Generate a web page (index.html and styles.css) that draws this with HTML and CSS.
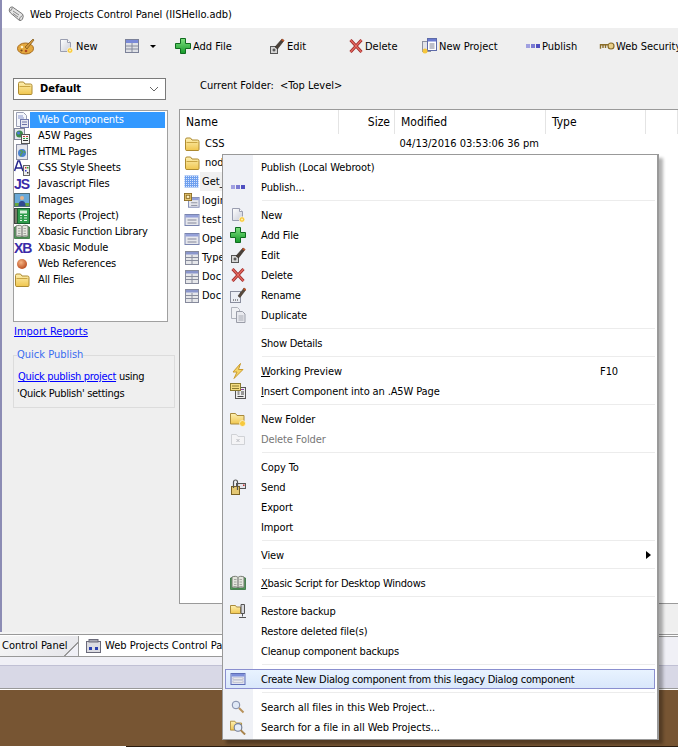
FILE: index.html
```html
<!DOCTYPE html>
<html lang="en">
<head>
  <meta charset="UTF-8">
  <title>Web Projects Control Panel</title>
  <link rel="stylesheet" href="styles.css">
</head>
<body>
  <!-- icon sprite -->
  <svg class="sprite" xmlns="http://www.w3.org/2000/svg">
    <defs>
      <linearGradient id="gold" x1="0" y1="0" x2="0" y2="1"><stop offset="0" stop-color="#fdf0b4"/><stop offset="1" stop-color="#f0c64e"/></linearGradient>
      <linearGradient id="green" x1="0" y1="0" x2="0" y2="1"><stop offset="0" stop-color="#7fe07f"/><stop offset="1" stop-color="#159a2a"/></linearGradient>
      <radialGradient id="ball" cx=".4" cy=".35" r=".7"><stop offset="0" stop-color="#f6b483"/><stop offset="1" stop-color="#b8481a"/></radialGradient>
      <linearGradient id="paper" x1="0" y1="0" x2="1" y2="1"><stop offset="0" stop-color="#fff"/><stop offset="1" stop-color="#c9ccd8"/></linearGradient>
    </defs>
    <symbol id="i-folder" viewBox="0 0 16 16"><path d="M1.500 3.500q0-1.500 1.500-1.500h3.500l1.500 2h5.500q1.500 0 1.500 1.500v8q0 1-1 1h-11q-1.500 0-1.500-1z" fill="url(#gold)" stroke="#ad8a30"/><path d="M2.500 6.500h11" stroke="#c9a544"/></symbol>
    <symbol id="i-scroll" viewBox="0 0 16 16"><path d="M1.500 2.500q1-2 3-1.500l10 7q1.500 2 0 5-1 2-3 1.500L2.500 7q-2-2-1-4.500z" fill="#e4e4e4" stroke="#777"/><path d="M1.500 4.500q2 1 3-3M11.500 14.500q-1-3 3-5M5 5l6 4M5 7.500l5 3.500" fill="none" stroke="#888"/></symbol>
    <symbol id="i-palette" viewBox="0 0 18 18"><ellipse cx="8.500" cy="11.500" rx="8" ry="5.500" fill="#e4a83e" stroke="#a5691c"/><circle cx="5" cy="10" r="1.300" fill="#fff1c4"/><circle cx="9" cy="14" r="1.300" fill="#b24a20"/><circle cx="4.500" cy="13.500" r="1.100" fill="#7b4a1a"/><path d="M8 10L16 2l1 1-7 9z" fill="#d2963a" stroke="#7a5418" stroke-width=".7"/></symbol>
    <symbol id="i-new" viewBox="0 0 16 16"><path d="M2.500 1.500h7l3 3v9h-10z" fill="url(#paper)" stroke="#9a9eb0"/><path d="M9.500 1.500v3h3" fill="#fff" stroke="#9a9eb0"/><circle cx="12" cy="12.500" r="2.800" fill="#f7c93e" stroke="#fff" stroke-width=".6"/><circle cx="12" cy="12.500" r="1" fill="#fff2b8"/></symbol>
    <symbol id="i-grid" viewBox="0 0 16 16"><rect x="1.500" y="1.500" width="13" height="13" fill="#dfe1e6" stroke="#7b8198"/><rect x="2" y="2" width="12" height="3" fill="#7a8ad8"/><path d="M8 5v9M2 8h12M2 11h12" stroke="#858a9c"/></symbol>
    <symbol id="i-grid-s" viewBox="0 0 16 16"><rect x="1.500" y="1.500" width="13" height="13" fill="#e6e7ea" stroke="#868a9c"/><rect x="2" y="2" width="12" height="2.500" fill="#8a96cc"/><path d="M8 5v9M2 7.500h12M2 10.500h12" stroke="#8a8e9e"/></symbol>
    <symbol id="i-add" viewBox="0 0 16 16"><path d="M5.500 .5h5v5h5v5h-5v5h-5v-5h-5v-5h5z" fill="url(#green)" stroke="#0f6b1e"/></symbol>
    <symbol id="i-edit" viewBox="0 0 16 16"><rect x="1.500" y="8.500" width="7" height="7" fill="#d5d5d5" stroke="#555"/><path d="M3.500 12h3M5 10.500v3" stroke="#333"/><path d="M6 9l7-8 2 1.500-6.500 8.500z" fill="#4a4038" stroke="#2c2622" stroke-width=".6"/><path d="M12.500 1.500L15 3" stroke="#c0562a" stroke-width="1.500"/></symbol>
    <symbol id="i-delete" viewBox="0 0 16 16"><path d="M2.500 2l11 12M13.500 2l-11 12" stroke="#9c2a2a" stroke-width="3"/><path d="M2.500 2l11 12M13.500 2l-11 12" stroke="#e66a60" stroke-width="1.200"/></symbol>
    <symbol id="i-project" viewBox="0 0 16 16"><rect x="1.500" y="3.500" width="8" height="10" fill="#e2e3e8" stroke="#8c90a0"/><rect x="6.500" y=".5" width="9" height="12" fill="#fff" stroke="#5d6aa8"/><rect x="7" y="1" width="8" height="2.500" fill="#6b7bd0"/><path d="M8.500 6h5M8.500 8h5M8.500 10h5" stroke="#7b7f93"/><circle cx="4" cy="13" r="2.500" fill="#f6c63c"/></symbol>
    <symbol id="i-publish" viewBox="0 0 16 16"><rect x="1" y="6" width="4" height="4" fill="#a0a0e0"/><rect x="6" y="6" width="4" height="4" fill="#7a7ad2"/><rect x="11" y="6" width="4" height="4" fill="#4f4fc0"/></symbol>
    <symbol id="i-key" viewBox="0 0 16 16"><circle cx="12" cy="8" r="3" fill="#e8cf8a" stroke="#8a6d2a" stroke-width="1.200"/><path d="M9 6.800H1.500v4M4 7v3M6.500 7v3" fill="none" stroke="#8a6d2a" stroke-width="1.400"/></symbol>
    <symbol id="i-webcomp" viewBox="0 0 16 16"><path d="M2.500 .5h7l3 3v11h-10z" fill="#f4f6fb" stroke="#9a9fb4"/><path d="M4 4h5M4 6h6" stroke="#8a96cc"/><rect x="6.500" y="7.500" width="8" height="8" fill="#e6e8f0" stroke="#6f79ac"/><path d="M8 10h5M8 12.500h5" stroke="#6a72a8"/></symbol>
    <symbol id="i-a5w" viewBox="0 0 16 16"><rect x=".5" y=".5" width="10" height="11" fill="#e6e7ee" stroke="#81859a"/><circle cx="5.500" cy="6" r="3.500" fill="#3e8a4a"/><circle cx="4.500" cy="5" r="1.500" fill="#4d7ae0"/><rect x="7.500" y="6.500" width="8" height="9" fill="#f4f4f4" stroke="#555"/><path d="M9 8.500h2M12 8.500h2" stroke="#c03a3a"/><path d="M9 10.500h2M12 10.500h2" stroke="#2f9a3a"/><path d="M9 12.500h5" stroke="#333"/></symbol>
    <symbol id="i-html" viewBox="0 0 16 16"><rect x="2.500" y=".5" width="11" height="15" fill="#e6e7ee" stroke="#8a8ea2"/><circle cx="8" cy="9" r="4" fill="#4a82cc"/><path d="M6 7c2-1 3 1 2 2s-2 1-1 3M10 7l1 2" stroke="#5aa04a" stroke-width="1.300" fill="none"/></symbol>
    <symbol id="i-css" viewBox="0 0 16 16"><path d="M.5 11L4 1h1.500L9 11M2 8h5.500" fill="none" stroke="#25258c" stroke-width="1.500"/><rect x="9.500" y="5.500" width="6" height="10" fill="#eee" stroke="#666"/><rect x="11" y="7" width="1.500" height="1.500" fill="#c33"/><rect x="13" y="7" width="1.500" height="1.500" fill="#3a3"/><rect x="11" y="10" width="1.500" height="1.500" fill="#33c"/><rect x="13" y="12" width="1.500" height="1.500" fill="#333"/></symbol>
    <symbol id="i-image" viewBox="0 0 16 16"><rect x=".5" y="1.500" width="15" height="13" fill="#6aa9d8" stroke="#4f6d7a"/><rect x="1" y="11" width="14" height="3" fill="#67a83e"/><circle cx="8" cy="6" r="2" fill="#e6b48c"/><path d="M4.500 14c0-4 1.500-5 3.500-5s3.500 1 3.500 5z" fill="#324a90"/></symbol>
    <symbol id="i-report" viewBox="0 0 16 16"><rect x=".5" y=".5" width="4" height="15" fill="#7a7a6a" stroke="#444"/><rect x="3.500" y=".5" width="12" height="15" fill="#2f9c4c" stroke="#1a5e2e"/><rect x="6" y="2.500" width="7" height="3" fill="#d8f0dc"/><path d="M6 7.500h2M10 7.500h3M6 10h2M10 10h3M6 12.500h2M10 12.500h3" stroke="#e4f6e8" stroke-width="1.200"/></symbol>
    <symbol id="i-book" viewBox="0 0 16 16"><path d="M.5 14.500V3l2-.5v10.500h11V2.500l2 .5v11.500z" fill="#4f9a58" stroke="#35703e" stroke-width=".8"/><path d="M2 12.500V2c2.500-1 4.500-1 6 .5 1.500-1.500 3.500-1.500 6-.5v10.500c-2.500-1-4.500-1-6 .5-1.500-1.500-3.500-1.500-6-.5z" fill="#e4e6de" stroke="#757a70"/><path d="M8 3v9.500" stroke="#666"/><path d="M4 4.500h2.500M4 7h2.500M4 9.500h2.500M9.500 4.500H12M9.500 7H12M9.500 9.500H12" stroke="#a6a8a2"/></symbol>
    <symbol id="i-ball" viewBox="0 0 16 16"><circle cx="8" cy="8" r="5" fill="url(#ball)"/></symbol>
    <symbol id="i-dialog" viewBox="0 0 16 16"><rect x="1" y="2.500" width="14" height="11" fill="#dfe2f2" stroke="#5f6fb8"/><rect x="1.500" y="3" width="13" height="2.500" fill="#7d8fda"/><rect x="3" y="7" width="10" height="1.500" fill="#fff" stroke="#8a8a9a" stroke-width=".4"/><rect x="3" y="10" width="10" height="1.500" fill="#fff" stroke="#8a8a9a" stroke-width=".4"/></symbol>
    <symbol id="i-dialog-g" viewBox="0 0 16 16"><rect x="1" y="2.500" width="14" height="11" fill="#e6e7ec" stroke="#7a85b0"/><rect x="1.500" y="3" width="13" height="2.500" fill="#94a0d8"/><path d="M3.500 8h9M3.500 11h9" stroke="#84889a" stroke-width="1.200"/></symbol>
    <symbol id="i-locked" viewBox="0 0 18 18"><rect x="5" y="5" width="12" height="11" fill="#e6e7ec" stroke="#7a85b0"/><rect x="5.500" y="5.500" width="11" height="2.500" fill="#94a0d8"/><path d="M8 11h7M8 14h7" stroke="#84889a"/><rect x=".5" y=".5" width="8" height="8" fill="#e8c874" stroke="#8a6a20"/><rect x="2.500" y="2.500" width="4" height="3.500" fill="#fff3c8" stroke="#8a6a20"/></symbol>
    <symbol id="i-pattern" viewBox="0 0 16 16"><defs><pattern id="dots" width="2" height="2" patternUnits="userSpaceOnUse"><rect width="2" height="2" fill="#6fa0ee"/><rect width="1" height="1" fill="#d8e6ff"/></pattern></defs><rect x=".5" y="1.500" width="14" height="12" fill="url(#dots)"/></symbol>
    <symbol id="i-rename" viewBox="0 0 16 16"><rect x=".5" y="4.500" width="10" height="11" fill="#eceef4" stroke="#8a8e9e"/><path d="M3 13h1M5 13h1M7 13h1" stroke="#333"/><path d="M8 9l6-8 2 1.500-6 8z" fill="#5a4a3c" stroke="#2c2622" stroke-width=".5"/><path d="M13.500 1.500L16 3" stroke="#c0562a" stroke-width="1.500"/></symbol>
    <symbol id="i-dup" viewBox="0 0 16 16"><path d="M1.500 .5h6l2 2v9h-8z" fill="#f0f1f4" stroke="#b0b3bc"/><path d="M6.500 4.500h6l2.500 2.500v8.500h-8.500z" fill="#e8e9ee" stroke="#9a9da8"/><path d="M8.500 9h5M8.500 11h5M8.500 13h5" stroke="#a8abb4"/></symbol>
    <symbol id="i-bolt" viewBox="0 0 16 16"><path d="M10.500 .5L3 9h4l-3 6.500L13 6.500H8.500z" fill="#f5d468" stroke="#c99a2c"/></symbol>
    <symbol id="i-insert" viewBox="0 0 16 16"><rect x="5.500" y="4.500" width="10" height="11" fill="#eee" stroke="#555"/><path d="M7.500 9h2M11 9h3M7.500 11h2M11 11h3M7.500 13.500h6" stroke="#444"/><path d="M11 6.500h3" stroke="#8a3aa0"/><rect x=".5" y=".5" width="10" height="7" fill="#f4dc80" stroke="#8a7a30"/><path d="M2 3h7M2 5.500h7" stroke="#8a7a30"/></symbol>
    <symbol id="i-newfolder" viewBox="0 0 16 16"><path d="M.5 2.500h5l1.500 2h7v8.500H.5z" fill="url(#gold)" stroke="#a98a3c"/><circle cx="12.500" cy="12.500" r="3" fill="#f7c93e" stroke="#fff" stroke-width=".6"/></symbol>
    <symbol id="i-delfolder" viewBox="0 0 16 16"><path d="M1.500 3.500h5l1.500 2h6.500v8h-13z" fill="#f4f4f6" stroke="#d0d2d6"/><path d="M6.500 8l3 3M9.500 8l-3 3" stroke="#b8bac0"/></symbol>
    <symbol id="i-send" viewBox="0 0 16 16"><rect x="6.500" y="4.500" width="9" height="5" fill="#e4e4ea" stroke="#555"/><rect x="13" y="5.500" width="1.500" height="1.500" fill="#c03030"/><rect x="1.500" y="7.500" width="8" height="8" fill="#e4c874" stroke="#7a6224"/><path d="M3.500 9V3a2 2 0 0 1 4 0v8" fill="none" stroke="#555" stroke-width="1.200"/></symbol>
    <symbol id="i-restore" viewBox="0 0 16 16"><path d="M.5 2.500h5l1 1.500h4v6.500h-10z" fill="url(#gold)" stroke="#a98a3c"/><path d="M11 1.500h3.500v9H11zM12.500 10.500v3M9 14.500h7" fill="#d8d8dc" stroke="#555"/></symbol>
    <symbol id="i-search" viewBox="0 0 16 16"><circle cx="6" cy="6" r="3.800" fill="#dfe8f6" stroke="#7f8aa8"/><path d="M9 9l4.500 4.500" stroke="#b8925a" stroke-width="2"/></symbol>
    <symbol id="i-searchall" viewBox="0 0 18 18"><path d="M.5 2.500h5l1.500 2h6v8H.5z" fill="url(#gold)" stroke="#a98a3c"/><circle cx="9" cy="9.500" r="4.300" fill="#e4ecf8" stroke="#6f7a98" stroke-width="1.200"/><path d="M12 12.500l5 5" stroke="#a8844e" stroke-width="2.200"/></symbol>
    <symbol id="i-tab" viewBox="0 0 16 16"><rect x=".5" y="3.500" width="14" height="11" fill="#dcdce2" stroke="#6a6a7a"/><rect x="3" y="1.500" width="9" height="2.500" fill="#a8a8b4" stroke="#6a6a7a"/><rect x="3" y="9" width="3" height="3" fill="#2a40b0"/><rect x="9" y="9" width="3" height="3" fill="#2a40b0"/></symbol>
  </svg>

  <div class="app">
    <div class="panel-wrap">
      <div class="titlebar">
        <svg class="ico"><use href="#i-scroll"/></svg>
        <span>Web Projects Control Panel (IISHello.adb)</span>
      </div>

      <div class="panel">
        <div class="toolbar">
          <div class="tool"><svg class="ico ico-lg"><use href="#i-palette"/></svg></div>
          <div class="tool"><svg class="ico"><use href="#i-new"/></svg>New</div>
          <div class="tool"><svg class="ico"><use href="#i-grid"/></svg><i class="caret"></i></div>
          <div class="tool"><svg class="ico"><use href="#i-add"/></svg>Add File</div>
          <div class="tool"><svg class="ico"><use href="#i-edit"/></svg>Edit</div>
          <div class="tool flush"><svg class="ico"><use href="#i-delete"/></svg>Delete</div>
          <div class="tool"><svg class="ico"><use href="#i-project"/></svg>New Project</div>
          <div class="tool flush"><svg class="ico"><use href="#i-publish"/></svg>Publish</div>
          <div class="tool flush"><svg class="ico"><use href="#i-key"/></svg>Web Security</div>
        </div>

        <div class="subbar">
          <div class="combo">
            <svg class="ico"><use href="#i-folder"/></svg>
            <b>Default</b>
            <svg class="chevron" viewBox="0 0 10 6"><path d="M1 1l4 4 4-4" fill="none" stroke="#666"/></svg>
          </div>
          <div class="current">Current Folder:<span>&lt;Top Level&gt;</span></div>
        </div>

        <div class="content">
          <div class="side">
            <ul class="types">
              <li class="on"><svg class="ico"><use href="#i-webcomp"/></svg><span>Web Components</span></li>
              <li><svg class="ico"><use href="#i-a5w"/></svg><span>A5W Pages</span></li>
              <li><svg class="ico"><use href="#i-html"/></svg><span>HTML Pages</span></li>
              <li><svg class="ico"><use href="#i-css"/></svg><span>CSS Style Sheets</span></li>
              <li><em class="glyph">JS</em><span>Javascript Files</span></li>
              <li><svg class="ico"><use href="#i-image"/></svg><span>Images</span></li>
              <li><svg class="ico"><use href="#i-report"/></svg><span>Reports (Project)</span></li>
              <li><svg class="ico"><use href="#i-book"/></svg><span class="tight">Xbasic Function Library</span></li>
              <li><em class="glyph">XB</em><span>Xbasic Module</span></li>
              <li><svg class="ico"><use href="#i-ball"/></svg><span>Web References</span></li>
              <li><svg class="ico"><use href="#i-folder"/></svg><span>All Files</span></li>
            </ul>
            <a class="import" href="#">Import Reports</a>
            <fieldset class="quick">
              <legend>Quick Publish</legend>
              <p class="quick-a"><a href="#">Quick publish project</a> using</p>
              <p>'Quick Publish' settings</p>
            </fieldset>
          </div>

          <div class="files">
            <div class="files-head">
              <div class="col-name">Name</div>
              <div class="col-size">Size</div>
              <div class="col-mod">Modified</div>
              <div class="col-type">Type</div>
              <div class="col-rest"></div>
            </div>
            <div class="file"><svg class="ico"><use href="#i-folder"/></svg><span class="file-name pad">CSS</span><span class="file-date">04/13/2016 03:53:06 36 pm</span></div>
            <div class="file"><svg class="ico"><use href="#i-folder"/></svg><span class="file-name pad">node</span></div>
            <div class="file hover"><svg class="ico"><use href="#i-pattern"/></svg><span class="file-name">Get_</span></div>
            <div class="file"><svg class="ico"><use href="#i-locked"/></svg><span class="file-name">login</span></div>
            <div class="file"><svg class="ico"><use href="#i-dialog-g"/></svg><span class="file-name">test</span></div>
            <div class="file"><svg class="ico"><use href="#i-dialog-g"/></svg><span class="file-name">Open</span></div>
            <div class="file"><svg class="ico"><use href="#i-grid-s"/></svg><span class="file-name">Type</span></div>
            <div class="file"><svg class="ico"><use href="#i-grid-s"/></svg><span class="file-name">Doc</span></div>
            <div class="file"><svg class="ico"><use href="#i-grid-s"/></svg><span class="file-name">Doc</span></div>
          </div>
        </div>
      </div>
    </div>

    <div class="tabs">
      <div class="tab first">Control Panel</div>
      <div class="tab second"><svg class="ico"><use href="#i-tab"/></svg>Web Projects Control Panel</div>
    </div>
    <div class="statusbar"></div>
    <div class="desktop"></div>
    <div class="desktop-edge"></div>

    <!-- right click menu -->
    <div class="menu">
      <div class="item"><i></i><span>Publish (Local Webroot)</span></div>
      <div class="item"><svg class="ico"><use href="#i-publish"/></svg><span>Publish...</span></div>
      <hr>
      <div class="item"><svg class="ico"><use href="#i-new"/></svg><span>New</span></div>
      <div class="item"><svg class="ico"><use href="#i-add"/></svg><span>Add File</span></div>
      <div class="item"><svg class="ico"><use href="#i-edit"/></svg><span>Edit</span></div>
      <div class="item"><svg class="ico"><use href="#i-delete"/></svg><span>Delete</span></div>
      <div class="item"><svg class="ico"><use href="#i-rename"/></svg><span>Rename</span></div>
      <div class="item"><svg class="ico"><use href="#i-dup"/></svg><span>Duplicate</span></div>
      <hr>
      <div class="item tight"><i></i><span>Show Details</span></div>
      <hr>
      <div class="item loose"><svg class="ico"><use href="#i-bolt"/></svg><span><u>W</u>orking Preview</span><kbd>F10</kbd></div>
      <div class="item"><svg class="ico"><use href="#i-insert"/></svg><span><u>I</u>nsert Component into an .A5W Page</span></div>
      <hr>
      <div class="item"><svg class="ico"><use href="#i-newfolder"/></svg><span>New Folder</span></div>
      <div class="item disabled"><svg class="ico"><use href="#i-delfolder"/></svg><span>Delete Folder</span></div>
      <hr>
      <div class="item"><i></i><span>Copy To</span></div>
      <div class="item"><svg class="ico"><use href="#i-send"/></svg><span>Send</span></div>
      <div class="item"><i></i><span>Export</span></div>
      <div class="item"><i></i><span>Import</span></div>
      <hr>
      <div class="item"><i></i><span>View</span><b class="arrow"></b></div>
      <hr>
      <div class="item tight"><svg class="ico"><use href="#i-book"/></svg><span><u>X</u>basic Script for Desktop Windows</span></div>
      <hr>
      <div class="item"><svg class="ico"><use href="#i-restore"/></svg><span>Restore backup</span></div>
      <div class="item"><i></i><span>Restore deleted file(s)</span></div>
      <div class="item tight"><i></i><span>Cleanup component backups</span></div>
      <hr>
      <div class="item active tight"><svg class="ico"><use href="#i-dialog"/></svg><span>Create New Dialog component from this legacy Dialog component</span></div>
      <hr>
      <div class="item loose"><svg class="ico"><use href="#i-search"/></svg><span>Search all files in this Web Project...</span></div>
      <div class="item loose"><svg class="ico"><use href="#i-searchall"/></svg><span>Search for a file in all Web Projects...</span></div>
    </div>
  </div>
</body>
</html>
```

FILE: styles.css
```css
html, body {
  margin: 0;
  height: 100%;
  background: #fff;
}
body {
  font-family: "DejaVu Sans Condensed", "Open Sans", sans-serif;
  font-size: 11px;
  color: #000;
}
.sprite {
  position: absolute;
  width: 0;
  height: 0;
}
.ico {
  width: 16px;
  height: 16px;
  flex: none;
  display: block;
}
.ico-lg {
  width: 18px;
  height: 18px;
}
.tight {
  letter-spacing: -.25px;
}
.app {
  position: relative;
  width: 678px;
  height: 747px;
  overflow: hidden;
  display: flex;
  flex-direction: column;
}
.panel-wrap {
  border-left: 2px solid #8c8cb4;
}

/* title and toolbar */
.titlebar {
  height: 28px;
  display: flex;
  align-items: center;
  gap: 6px;
  padding-left: 6px;
  background: #fff;
}
.panel {
  height: 604px;
  background: #efefef;
  display: flex;
  flex-direction: column;
}
.toolbar {
  height: 36px;
  display: grid;
  grid-template-columns: 41px 66px 51px 94px 79px 73px 104px 74px 1fr;
  padding-left: 15px;
  white-space: nowrap;
}
.tool {
  display: flex;
  align-items: center;
  gap: 2px;
}
.tool.flush {
  gap: 1px;
}
.caret {
  margin-left: 8px;
  border: 3px solid transparent;
  border-top: 3px solid #000;
  border-bottom: 0;
}
.subbar {
  height: 45px;
  box-sizing: border-box;
  padding: 14px 0 0 11px;
  display: flex;
  align-items: flex-start;
}
.combo {
  width: 153px;
  height: 22px;
  box-sizing: border-box;
  background: #fff;
  border: 1px solid #7a7a7a;
  display: flex;
  align-items: center;
  padding: 0 6px 2px 3px;
  gap: 7px;
}
.chevron {
  width: 10px;
  height: 6px;
  margin: 2px 0 0 auto;
}
.current {
  margin: 0 0 0 34px;
  line-height: 15px;
}
.current span {
  margin-left: 6px;
}

/* left column */
.content {
  display: flex;
  padding-left: 11px;
  gap: 4px;
}
.side {
  width: 162px;
  flex: none;
  padding-top: 1px;
}
.types {
  list-style: none;
  margin: 0;
  padding: 1px 1px 1px 0;
  width: 155px;
  height: 212px;
  box-sizing: border-box;
  background: #fff;
  border: 1px solid #a0a0a0;
  letter-spacing: -.1px;
}
.types li {
  height: 16px;
  display: flex;
  align-items: center;
}
.types span {
  flex: 1;
  margin-right: 1px;
  padding-left: 8px;
  line-height: 16px;
}
.types .on span {
  background: #3399ff;
  color: #fff;
}
.glyph {
  width: 16px;
  flex: none;
  font: bold 14px/16px "Liberation Sans", sans-serif;
  color: #3a2aa8;
  letter-spacing: -1px;
}
.import {
  display: block;
  margin: 2px 0 0 1px;
  line-height: 16px;
  color: #0000ff;
}
.quick {
  margin: 8px 0 0;
  padding: 0 3px 5px;
  border: 1px solid #dcdcdc;
  letter-spacing: -.3px;
}
.quick legend {
  padding: 0;
  line-height: 14px;
  color: #3a6cf0;
  letter-spacing: 0;
}
.quick p {
  margin: 0;
  line-height: 17px;
}
.quick-a {
  padding: 6px 0 0 1px;
}
.quick a {
  color: #0000ff;
}

/* file list */
.files {
  flex: 1;
  height: 495px;
  box-sizing: border-box;
  background: #fff;
  border: 1px solid #9a9a9a;
  border-right: 0;
}
.files-head {
  height: 24px;
  display: flex;
  align-items: center;
  font-size: 12px;
}
.files-head div {
  height: 100%;
  box-sizing: border-box;
  line-height: 24px;
  border-right: 1px solid #e4e4e4;
}
.col-name { width: 159px; padding-left: 6px; }
.col-size { width: 56px; padding-right: 4px; text-align: right; }
.col-mod { width: 151px; padding-left: 6px; }
.col-type { width: 100px; padding-left: 6px; }
.col-rest { flex: 1; }
.file {
  height: 19px;
  display: flex;
  align-items: center;
  padding-left: 4px;
}
.file-name {
  padding: 0 2px;
  line-height: 19px;
}
.file-name.pad {
  margin-left: 3px;
}
.file.hover .file-name {
  background: #f0f0f0;
  width: 40px;
}
.file-date {
  margin-left: 173px;
}

/* tabs at the bottom */
.tabs {
  height: 33px;
  box-sizing: border-box;
  border-top: 2px solid #f4f4f4;
  background: linear-gradient(#999 1px, #fff 1px, #fff 2px, #999 2px, #999 3px, #f0f0f6 3px);
  display: flex;
  align-items: flex-start;
}
.tab {
  box-sizing: border-box;
  display: flex;
  align-items: center;
  gap: 3px;
  white-space: nowrap;
  border-bottom: 1px solid #999;
}
.tab.first {
  width: 79px;
  height: 21px;
  margin-top: 2px;
  padding: 0 0 2px 2px;
  background: linear-gradient(135deg, #f6f6f6, #e8e8ec 85%, #999 85%, #999 87%, #f0f0f6 87%);
  border-right: 1px solid #999;
}
.tab.second {
  width: 180px;
  height: 23px;
  padding-left: 7px;
  background: #fff;
  border-top: 1px solid #999;
}
.statusbar {
  height: 24px;
  box-sizing: border-box;
  background: #d8d8e6;
  border-top: 1px solid #c0c0d4;
  border-bottom: 1px solid #999;
}
.desktop {
  flex: 1;
  background: #775533;
  border-top: 1px solid #fff;
}
.desktop-edge {
  height: 1px;
  margin-left: 126px;
  background: #2a1c10;
}

/* context menu */
.menu {
  position: absolute;
  left: 222px;
  top: 154px;
  width: 437px;
  box-sizing: border-box;
  padding: 2px 0;
  border: 1px solid #999;
  border-right-width: 2px;
  background: linear-gradient(to right, #eff1f6 30px, #fff 30px);
  box-shadow: 4px 4px 3px rgba(0, 0, 0, .3);
  letter-spacing: -.12px;
}
.item {
  height: 20px;
  display: flex;
  align-items: center;
  white-space: nowrap;
}
.item.tight {
  letter-spacing: -.24px;
}
.item.loose {
  letter-spacing: -.06px;
}
.item .ico, .item > i {
  flex: none;
  width: 16px;
  height: 16px;
  margin: 0 15px 0 7px;
}
.item span {
  flex: 1;
}
.item kbd {
  font: inherit;
  width: 57px;
}
.item.disabled {
  color: #777;
}
.item.active {
  margin: 0 2px;
  box-sizing: border-box;
  border: 1px solid #8a8fcf;
  background: linear-gradient(#e8f3ff, #d9e7fb);
}
.item.active .ico {
  margin: 0 15px 0 4px;
}
.arrow {
  width: 0;
  height: 0;
  margin-right: 6px;
  border-left: 5px solid #000;
  border-top: 4px solid transparent;
  border-bottom: 4px solid transparent;
}
.menu hr {
  height: 1px;
  margin: 3px 2px 4px 39px;
  border: 0;
  background: #ececec;
}
```
